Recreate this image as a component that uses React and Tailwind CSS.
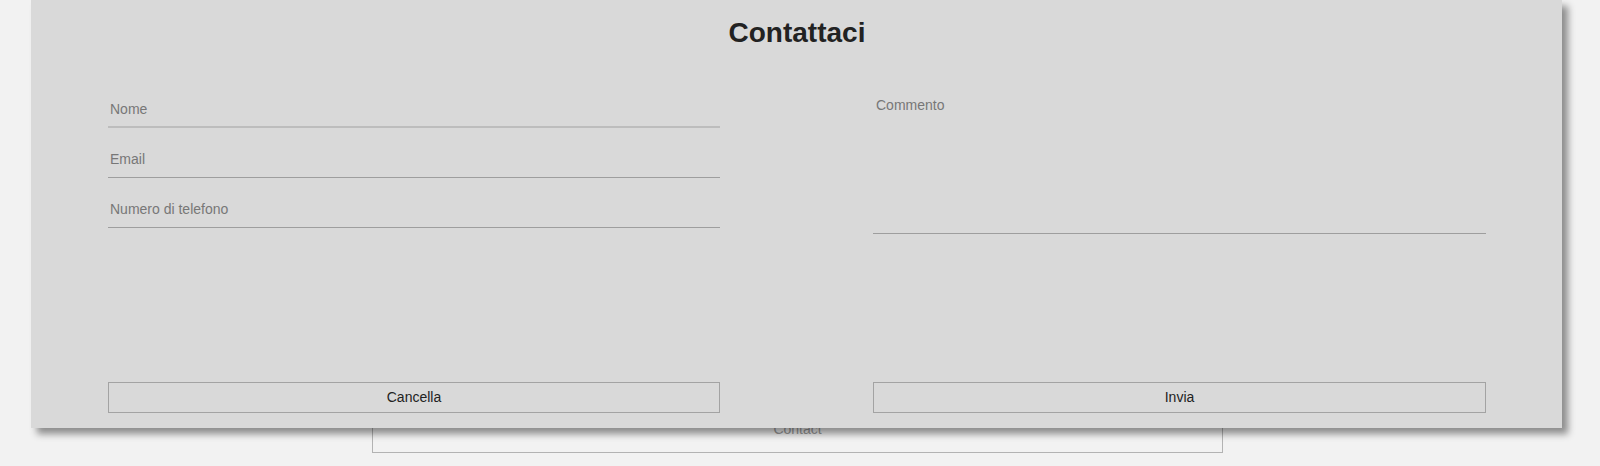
import React from 'react';

const font = { fontFamily: '"Liberation Sans", Arial, sans-serif' };

function Field({ placeholder, first }) {
  return (
    <input
      type="text"
      placeholder={placeholder}
      className={`h-[36px] w-full bg-transparent px-[2px] text-[14px] text-[#222] placeholder:text-[#777] outline-none ${
        first ? 'border-b-2 border-[#bdbdbd]' : 'border-b border-[#9e9e9e] pb-[2px]'
      }`}
    />
  );
}

export default function App() {
  return (
    <div className="relative h-[466px] w-full overflow-hidden bg-[#f2f2f2]" style={font}>
      {/* page behind the dialog */}
      <div className="pt-[405px]">
        <div className="ml-[372px] flex h-[48px] w-[851px] items-start justify-center border border-[#b3b3b3] pt-[15px] text-[14px] leading-[16px] text-[#9a9a9a]">
          Contact
        </div>
      </div>

      {/* dialog */}
      <div className="absolute left-[31px] top-0 flex h-[428px] w-[1531px] flex-col bg-[#d9d9d9] pl-[77px] pr-[76px] shadow-[6px_6px_7px_rgba(0,0,0,0.42)]">
        <h1 className="mt-[17px] text-center text-[28px] font-bold leading-[32px] text-[#222]">
          Contattaci
        </h1>

        <div className="mt-[43px] flex justify-between">
          <div className="flex w-[612px] flex-col gap-[14px]">
            <Field placeholder="Nome" first />
            <Field placeholder="Email" />
            <Field placeholder="Numero di telefono" />
          </div>
          <textarea
            placeholder="Commento"
            className="h-[142px] w-[613px] resize-none border-b border-[#9e9e9e] bg-transparent px-[3px] pt-[5px] text-[14px] leading-[16px] text-[#222] placeholder:text-[#777] outline-none"
          />
        </div>

        <div className="mb-[15px] mt-auto flex justify-between">
          <button className="h-[31px] w-[612px] border border-[#a3a3a3] bg-transparent text-[14px] text-[#222]">
            Cancella
          </button>
          <button className="h-[31px] w-[613px] border border-[#a3a3a3] bg-transparent text-[14px] text-[#222]">
            Invia
          </button>
        </div>
      </div>
    </div>
  );
}
